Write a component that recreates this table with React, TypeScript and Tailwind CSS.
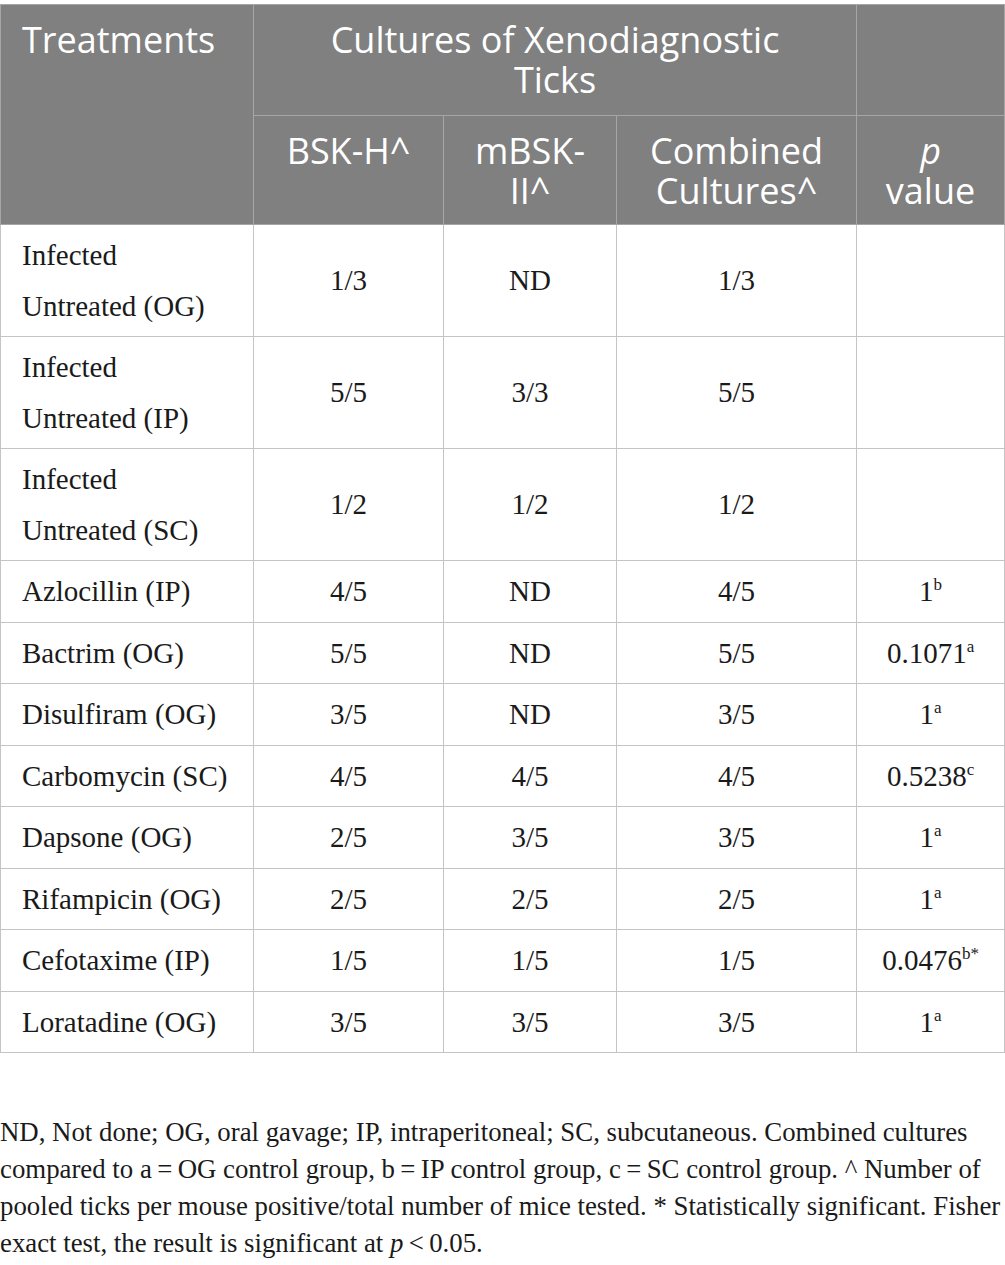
const ROWS: { name: string[]; bsk: string; mbsk: string; comb: string; p?: string; sup?: string }[] = [
  { name: ["Infected", "Untreated (OG)"], bsk: "1/3", mbsk: "ND", comb: "1/3" },
  { name: ["Infected", "Untreated (IP)"], bsk: "5/5", mbsk: "3/3", comb: "5/5" },
  { name: ["Infected", "Untreated (SC)"], bsk: "1/2", mbsk: "1/2", comb: "1/2" },
  { name: ["Azlocillin (IP)"], bsk: "4/5", mbsk: "ND", comb: "4/5", p: "1", sup: "b" },
  { name: ["Bactrim (OG)"], bsk: "5/5", mbsk: "ND", comb: "5/5", p: "0.1071", sup: "a" },
  { name: ["Disulfiram (OG)"], bsk: "3/5", mbsk: "ND", comb: "3/5", p: "1", sup: "a" },
  { name: ["Carbomycin (SC)"], bsk: "4/5", mbsk: "4/5", comb: "4/5", p: "0.5238", sup: "c" },
  { name: ["Dapsone (OG)"], bsk: "2/5", mbsk: "3/5", comb: "3/5", p: "1", sup: "a" },
  { name: ["Rifampicin (OG)"], bsk: "2/5", mbsk: "2/5", comb: "2/5", p: "1", sup: "a" },
  { name: ["Cefotaxime (IP)"], bsk: "1/5", mbsk: "1/5", comb: "1/5", p: "0.0476", sup: "b*" },
  { name: ["Loratadine (OG)"], bsk: "3/5", mbsk: "3/5", comb: "3/5", p: "1", sup: "a" },
];

const sans = "font-['Open_Sans',_'Liberation_Sans',_sans-serif]";
const serif = "font-['Liberation_Serif',_'Times_New_Roman',_serif]";
const th = "border border-[#a6a6a6] px-2 pt-[15px] text-center align-top font-normal";
const td = "border border-[#c4c4c4] py-[5px] text-center align-middle";

export default function App() {
  return (
    <div className="w-[1005px] bg-white pt-[4px]">
      <table className="w-[1004px] table-fixed border-collapse border border-[#c4c4c4]">
        <colgroup>
          <col className="w-[253px]" />
          <col className="w-[190px]" />
          <col className="w-[173px]" />
          <col className="w-[240px]" />
          <col className="w-[148px]" />
        </colgroup>
        <thead className={`${sans} bg-[#808080] text-white text-[36px] leading-[40px]`}>
          <tr className="h-[111px]">
            <th rowSpan={2} className="border border-[#a6a6a6] px-[21px] pt-[15px] text-left align-top font-normal">
              Treatments
            </th>
            <th colSpan={3} className={th}>
              Cultures of Xenodiagnostic
              <br />
              Ticks
            </th>
            <th className="border border-[#a6a6a6]" />
          </tr>
          <tr className="h-[109px]">
            <th className={th}>BSK-H^</th>
            <th className={th}>
              mBSK-
              <br />
              II^
            </th>
            <th className={th}>
              Combined
              <br />
              Cultures^
            </th>
            <th className={th}>
              <i>p</i>
              <br />
              value
            </th>
          </tr>
        </thead>
        <tbody className={`${serif} text-[#1a1a1a] text-[29px] leading-[50.5px]`}>
          {ROWS.map((r, i) => (
            <tr key={i}>
              <td className="border border-[#c4c4c4] px-[21px] py-[5px] text-left align-middle">
                {r.name.map((n, j) => (
                  <div key={j} className="whitespace-nowrap">{n}</div>
                ))}
              </td>
              <td className={td}>{r.bsk}</td>
              <td className={td}>{r.mbsk}</td>
              <td className={td}>{r.comb}</td>
              <td className={td}>
                {r.p}
                {r.sup && <sup className="text-[17px] relative -top-[11px] align-baseline leading-none">{r.sup}</sup>}
              </td>
            </tr>
          ))}
        </tbody>
      </table>

      <p className={`${serif} text-[#1a1a1a] mt-[61px] text-[26.8px] leading-[37px] whitespace-nowrap`}>
        ND, Not done; OG, oral gavage; IP, intraperitoneal; SC, subcutaneous. Combined cultures
        <br />
        compared to a{"\u2009"}={"\u2009"}OG control group, b{"\u2009"}={"\u2009"}IP control group, c{"\u2009"}={"\u2009"}SC control group. ^ Number of
        <br />
        pooled ticks per mouse positive/total number of mice tested. * Statistically significant. Fisher
        <br />
        exact test, the result is significant at <i>p</i>{"\u2009"}&lt;{"\u2009"}0.05.
      </p>
    </div>
  );
}
